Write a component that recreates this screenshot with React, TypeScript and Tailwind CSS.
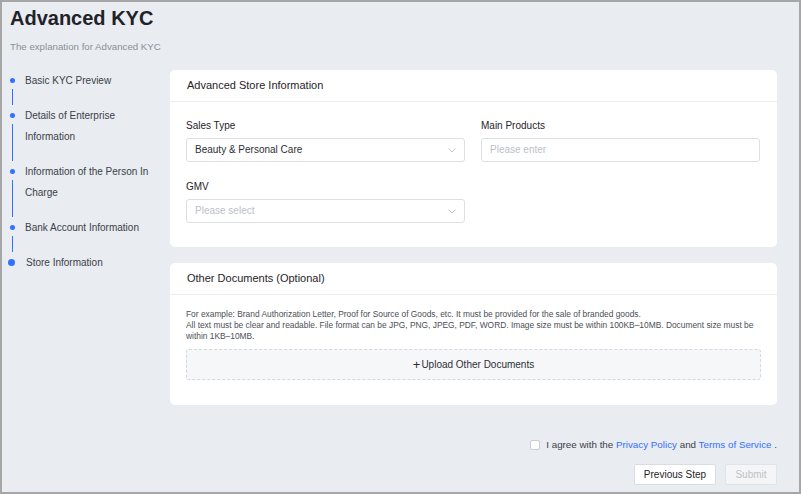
import React from "react";

const steps: { lines: string[] }[] = [
  { lines: ["Basic KYC Preview"] },
  { lines: ["Details of Enterprise", "Information"] },
  { lines: ["Information of the Person In", "Charge"] },
  { lines: ["Bank Account Information"] },
  { lines: ["Store Information"] },
];

function Chevron() {
  return (
    <svg width="8" height="5" viewBox="0 0 8 5" fill="none" className="shrink-0">
      <polyline points="0.5,0.5 4,4 7.5,0.5" stroke="#b8bcc4" strokeWidth="0.9" />
    </svg>
  );
}

function Field({ label, children }: { label: string; children: React.ReactNode }) {
  return (
    <div className="flex flex-col">
      <div className="text-[10px] leading-[14px] text-[#1f2329] mb-[5px]">{label}</div>
      {children}
    </div>
  );
}

function SelectBox({ value, placeholder }: { value?: string; placeholder?: string }) {
  return (
    <div className="h-[24px] w-[279px] rounded-[3px] border border-[#dcdfe5] bg-white flex items-center justify-between pl-[8px] pr-[8px]">
      <span className={"text-[10px] leading-[14px] " + (value ? "text-[#2b2f36]" : "text-[#bcc0c7]")}>
        {value ?? placeholder}
      </span>
      <Chevron />
    </div>
  );
}

function Card({ title, children }: { title: string; children: React.ReactNode }) {
  return (
    <div className="bg-white rounded-[5px] flex flex-col">
      <div className="h-[32px] border-b border-[#eceef1] flex items-center pl-[17px] text-[11px] font-medium text-[#1f2329]">
        {title}
      </div>
      {children}
    </div>
  );
}

export default function App() {
  return (
    <div className="w-[801px] h-[494px] border-2 border-[#a6a6a6] bg-[#e9ecf1] flex flex-col font-['Liberation_Sans',Arial,sans-serif] overflow-hidden">
      <div className="pl-[8px] pt-[4px]">
        <h1 className="text-[20px] leading-[24px] font-bold text-[#1f2329]">Advanced KYC</h1>
        <p className="mt-[10px] text-[9.7px] leading-[14px] text-[#8a909a]">The explanation for Advanced KYC</p>
      </div>
      <div className="mt-[16px] flex">
        <div className="w-[168px] pl-[8px]">
          {steps.map((s, i) => {
            const last = i === steps.length - 1;
            return (
              <div key={i} className="flex">
                <div className="w-[15px] flex flex-col">
                  <div className="h-[21px] flex items-center">
                    {last ? (
                      <div className="w-[7px] h-[7px] rounded-full bg-[#3370ff] ml-[-2px]" />
                    ) : (
                      <div className="w-[5px] h-[5px] rounded-full bg-[#3370ff]" />
                    )}
                  </div>
                  {!last && <div className="w-px flex-1 bg-[#3370ff] ml-[2px] mt-[-2px]" />}
                </div>
                <div className={"text-[10px] leading-[21px] text-[#3b4048] " + (last ? "pl-[1px]" : "pb-[14px]")}>
                  {s.lines.map((l, j) => (
                    <div key={j}>{l}</div>
                  ))}
                </div>
              </div>
            );
          })}
        </div>
        <div className="w-[607px] flex flex-col">
          <Card title="Advanced Store Information">
            <div className="pl-[16px] pt-[17px] pb-[24px] grid grid-cols-[279px_279px] gap-x-[16px] gap-y-[18px]">
              <Field label="Sales Type">
                <SelectBox value="Beauty & Personal Care" />
              </Field>
              <Field label="Main Products">
                <div className="h-[24px] w-[279px] rounded-[3px] border border-[#dcdfe5] bg-white flex items-center pl-[8px]">
                  <span className="text-[10px] leading-[14px] text-[#bcc0c7]">Please enter</span>
                </div>
              </Field>
              <Field label="GMV">
                <SelectBox placeholder="Please select" />
              </Field>
            </div>
          </Card>
          <div className="mt-[16px]">
            <Card title="Other Documents (Optional)">
              <div className="px-[16px] pt-[14px] pb-[25px]">
                <div className="text-[8.4px] leading-[11px] text-[#4a4f57] whitespace-nowrap">
                  <div>For example: Brand Authorization Letter, Proof for Source of Goods, etc. It must be provided for the sale of branded goods.</div>
                  <div>
                    All text must be clear and readable. File format can be JPG, PNG, JPEG, PDF, WORD. Image size must be within 100KB–10MB. Document size must be
                  </div>
                  <div>within 1KB–10MB.</div>
                </div>
                <div className="mt-[7px] h-[31px] rounded-[3px] border border-dashed border-[#d5d8de] bg-[#f6f7f9] flex items-center justify-center text-[10px] text-[#2b2f36]">
                  <span className="text-[13px] leading-[14px] font-light mr-[1px]">+</span>Upload Other Documents
                </div>
              </div>
            </Card>
          </div>
          <div className="mt-[33px] flex items-center justify-end h-[14px]">
            <div className="w-[10px] h-[10px] rounded-[2px] border border-[#c9cdd4] bg-white mr-[6px]" />
            <span className="text-[9.8px] leading-[14px] text-[#3b4048]">
              I agree with the <span className="text-[#3370ff]">Privacy Policy</span> and{" "}
              <span className="text-[#3370ff]">Terms of Service</span> .
            </span>
          </div>
          <div className="mt-[12px] flex justify-end gap-[9px]">
            <div className="h-[21px] w-[82px] rounded-[2px] border border-[#d9dce1] bg-white flex items-center justify-center text-[10px] text-[#1f2329]">
              Previous Step
            </div>
            <div className="h-[21px] w-[52px] rounded-[2px] border border-[#e1e3e6] bg-[#f4f5f6] flex items-center justify-center text-[10px] text-[#c0c3c8]">
              Submit
            </div>
          </div>
        </div>
      </div>
    </div>
  );
}
